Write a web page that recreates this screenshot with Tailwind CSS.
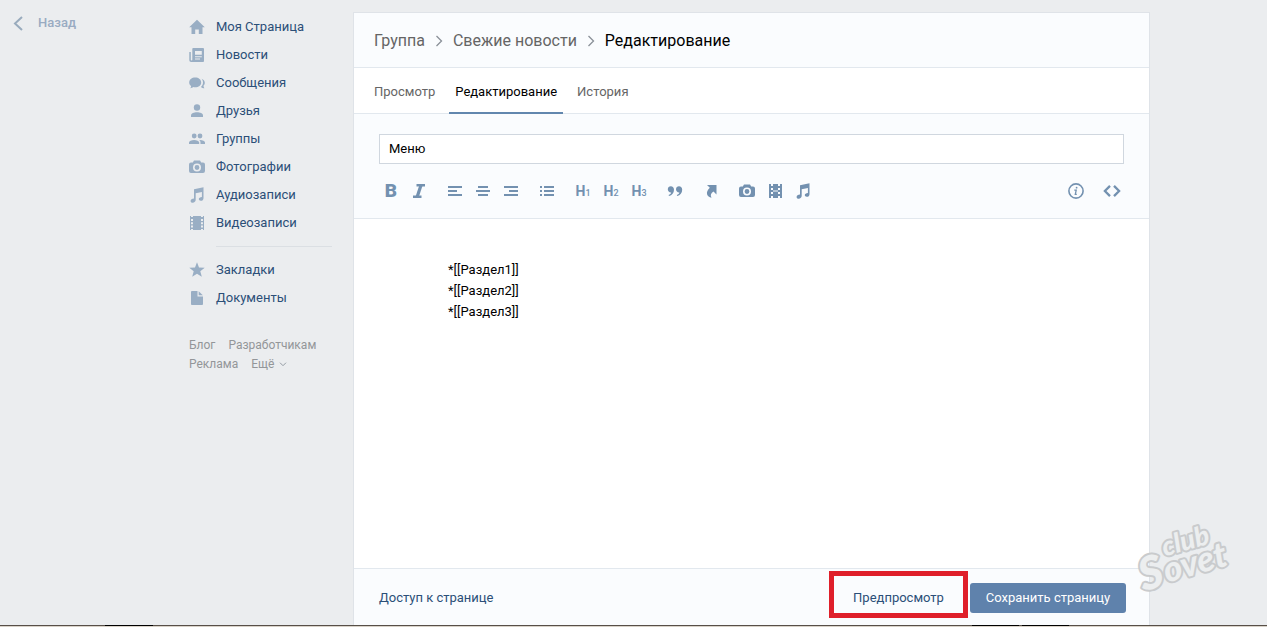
<!DOCTYPE html>
<html lang="ru">
<head>
<meta charset="utf-8">
<title>Редактирование</title>
<script src="https://cdn.jsdelivr.net/npm/@tailwindcss/browser@4"></script>
</head>
<body class="flex h-screen flex-col overflow-hidden bg-[#ebedef] font-[Roboto,'Noto_Sans',sans-serif] text-[13px] text-black">
<svg class="hidden" aria-hidden="true">
  <symbol id="camera" viewBox="0 0 16 14"><path fill-rule="evenodd" d="M5 .5h6l1.200 2H14a2 2 0 0 1 2 2V11a2 2 0 0 1-2 2H2a2 2 0 0 1-2-2V4.500a2 2 0 0 1 2-2h1.800zM8 3.500a4 4 0 1 0 0 8 4 4 0 0 0 0-8zm0 1.600a2.400 2.400 0 1 1 0 4.800 2.400 2.400 0 0 1 0-4.800z"/></symbol>
  <symbol id="film" viewBox="0 0 14 14"><path fill-rule="evenodd" d="M0 0h1v1h2V0h8v1h2V0h1v14h-1v-1h-2v1H3v-1H1v1H0zM1 3v2h2V3zm0 3.200v2h2v-2zM1 9.500v2h2v-2zM11 3v2h2V3zm0 3.200v2h2v-2zm0 3.300v2h2v-2z"/></symbol>
  <symbol id="film-split" viewBox="0 0 13 14"><path fill-rule="evenodd" d="M0 0h2v2h2V0h5v2h2V0h2v14h-2v-2H9v2H4v-2H2v2H0zM2 4v2h2V4zm0 4v2h2V8zM9 4v2h2V4zm0 4v2h2V8zM4 6.500v1h5v-1z"/></symbol>
  <symbol id="note" viewBox="0 0 14 16"><path fill-rule="evenodd" d="M4 2.300 13.500.3v10.900c0 1.600-1.200 2.600-2.700 2.600-1.200 0-2-.7-2-1.700 0-1.300 1.200-2.100 3.100-2.200V5L5.700 6.300v6.500c0 1.700-1.300 2.900-3.100 2.900-1.200 0-2-.7-2-1.800C.6 12.500 1.900 11.600 4 11.500z"/></symbol>
</svg>

<div class="flex min-h-0 flex-1 items-stretch pr-[117px]">
  <div class="w-[187px] shrink-0 pt-3 pl-[13px]">
    <a href="#" class="flex h-[22px] items-center gap-[14px] font-medium text-[#99abc2]">
      <svg class="h-[15px] w-[11px]" viewBox="0 0 11 15" fill="none" stroke="#99abbd" stroke-width="2"><path d="M9 1 2 7.500 9 14"/></svg>Назад</a>
  </div>

  <aside class="w-[166px] shrink-0 pt-[13px] pl-[2px]">
    <nav class="text-[#2b4f78]" aria-label="Главное меню">
      <a href="#" class="flex h-7 items-center gap-[11px]"><svg class="size-4" viewBox="0 0 16 16" fill="#99aec4"><path d="m8 .8 7.800 7.400H13.500V15H9.800v-4.600H6.200V15H2.500V8.200H.2z"/></svg>Моя Страница</a>
      <a href="#" class="flex h-7 items-center gap-[11px]"><svg class="size-4" viewBox="0 0 16 16" fill="#99aec4"><path fill-rule="evenodd" d="M4.500 1h9.300c.8 0 1.200.5 1.200 1.200v11.600c0 .8-.4 1.200-1.200 1.200H2.200C1 15 .3 14.200.3 13V5h1.500v8c0 .6 1.500.6 1.500 0V2.200C3.300 1.500 3.700 1 4.500 1zM6 4v3.800h6.800V4zm0 5.200v1h6.800v-1zm0 2.400v1h5v-1z"/></svg>Новости</a>
      <a href="#" class="flex h-7 items-center gap-[11px]"><svg class="size-4" viewBox="0 0 16 16" fill="#99aec4"><path d="M6.200 2.500c3.400 0 6 2.100 6 4.900s-2.600 4.900-6 4.900c-.7 0-1.300-.1-1.900-.3-.8.7-1.900 1.200-3.100 1.200.6-.6.9-1.400.9-2.200C.8 10.100.2 8.800.2 7.400c0-2.800 2.600-4.900 6-4.900z"/><path d="M12.600 3.700c1.900.7 3.200 2.200 3.200 4 0 1.200-.5 2.200-1.300 3 0 .8.300 1.800.9 2.500-1.300 0-2.600-.5-3.500-1.300 1.300-1.100 2.100-2.700 2.100-4.500 0-1.400-.5-2.700-1.400-3.700z"/></svg>Сообщения</a>
      <a href="#" class="flex h-7 items-center gap-[11px]"><svg class="size-4" viewBox="0 0 16 16" fill="#99aec4"><circle cx="8" cy="4.500" r="3.200"/><path d="M2 14v-1.500C2 10.300 5 9.300 8 9.300s6 1 6 3.200V14z"/></svg>Друзья</a>
      <a href="#" class="flex h-7 items-center gap-[11px]"><svg class="size-4" viewBox="0 0 16 16" fill="#99aec4"><circle cx="5.200" cy="5" r="2.400"/><circle cx="11" cy="5" r="2.400"/><path d="M0 13v-1.400c0-1.700 2.600-2.600 5.100-2.600s5.100.9 5.100 2.600V13zM11.500 13v-1.500c0-1-.5-1.800-1.300-2.400 2.800-.2 5.800.7 5.800 2.500V13z"/></svg>Группы</a>
      <a href="#" class="flex h-7 items-center gap-[11px]"><svg class="h-[14px] w-4" fill="#99aec4"><use href="#camera"/></svg>Фотографии</a>
      <a href="#" class="flex h-7 items-center gap-[11px]"><svg class="h-4 w-4" fill="#99aec4"><use href="#note"/></svg>Аудиозаписи</a>
      <a href="#" class="flex h-7 items-center gap-[11px]"><svg class="h-[14px] w-4" fill="#99aec4"><use href="#film"/></svg>Видеозаписи</a>
      <hr class="my-[9px] mr-[21px] ml-[27px] border-[#dbdfe3]">
      <a href="#" class="flex h-7 items-center gap-[11px]"><svg class="size-4" viewBox="0 0 16 16" fill="#99aec4"><path d="m8 .3 2 5.200 5.700.3-4.400 3.500 1.500 5.500L8 11.700l-4.800 3.100 1.500-5.500L.3 5.800 6 5.500z"/></svg>Закладки</a>
      <a href="#" class="flex h-7 items-center gap-[11px]"><svg class="size-4" viewBox="0 0 16 16" fill="#99aec4"><path d="M3.200 1H8.500v5.500H14v7.300c0 .8-.4 1.200-1.200 1.200H3.200C2.400 15 2 14.600 2 13.800V2.200C2 1.400 2.400 1 3.200 1z"/><path d="M9.700 1.200 13.800 5.300H9.700z"/></svg>Документы</a>
    </nav>
    <div class="mt-6 flex flex-wrap gap-x-[13px] text-xs leading-[19px] text-[#939699]">
      <a href="#" class="leading-[19px]">Блог</a><a href="#" class="leading-[19px]">Разработчикам</a>
      <a href="#" class="leading-[19px]">Реклама</a><a href="#" class="flex items-center gap-[5px] leading-[19px]">Ещё<svg class="h-[5px] w-2" viewBox="0 0 8 5" fill="none" stroke="#939ba3"><path d="m1 .7 3 3 3-3"/></svg></a>
    </div>
  </aside>

  <main class="mt-3 flex min-w-0 flex-1 flex-col border border-b-0 border-[#dfe3e8] bg-white">
    <header class="flex h-[55px] shrink-0 items-center gap-[9px] border-b border-[#e2e8ee] bg-[#fafcfe] px-5 pt-px text-base text-[#656565]">
      <a href="#">Группа</a>
      <svg class="h-3 w-[10px]" viewBox="0 0 10 12" fill="none" stroke="#8a9098" stroke-width="1.300"><path d="m2.500 1 5 5-5 5"/></svg>
      <a href="#">Свежие новости</a>
      <svg class="h-3 w-[10px]" viewBox="0 0 10 12" fill="none" stroke="#8a9098" stroke-width="1.300"><path d="m2.500 1 5 5-5 5"/></svg>
      <h1 class="text-black">Редактирование</h1>
    </header>
    <nav class="flex h-[46px] shrink-0 border-b border-[#e2e8ee] px-[14px] text-[#656565]" aria-label="Вкладки">
      <a href="#" class="flex h-[46px] items-center border-b-2 border-transparent px-[6px] pt-[3px]">Просмотр</a>
      <a href="#" aria-current="page" class="ml-2 flex h-[46px] items-center border-b-2 border-[#6287ae] px-[6px] pt-[3px] text-black">Редактирование</a>
      <a href="#" class="ml-2 flex h-[46px] items-center border-b-2 border-transparent px-[6px] pt-[3px]">История</a>
    </nav>

    <section class="h-[105px] shrink-0 border-b border-[#e2e8ee] bg-[#fafcfe] pt-5">
      <div class="px-[25px]"><input type="text" aria-label="Название" value="Меню" class="h-[30px] w-full border border-[#d0d7df] bg-white px-[9px] pb-px"></div>
      <div class="mt-[13px] flex items-center px-[23px] text-[#7391b0]">
        <button aria-label="Полужирный" class="h-7 w-7 text-[19px] leading-7 font-black">B</button>
        <button aria-label="Курсив" class="flex size-7 items-center justify-center"><svg class="size-4" viewBox="0 0 16 16" fill="none" stroke="currentColor" stroke-width="2.400"><path d="M5.500 2.200H14M2 13.800h8.500"/><path stroke-width="3.200" d="M10 2.200 6.200 13.800"/></svg></button>
        <button aria-label="По левому краю" class="ml-2 flex size-7 items-center justify-center"><svg class="size-4" viewBox="0 0 16 16" fill="currentColor"><path d="M1 3h14v2H1zm0 4h9v2H1zm0 4h14v2H1z"/></svg></button>
        <button aria-label="По центру" class="flex size-7 items-center justify-center"><svg class="size-4" viewBox="0 0 16 16" fill="currentColor"><path d="M3 3h10v2H3zM1 7h14v2H1zm2 4h10v2H3z"/></svg></button>
        <button aria-label="По правому краю" class="flex size-7 items-center justify-center"><svg class="size-4" viewBox="0 0 16 16" fill="currentColor"><path d="M1 3h14v2H1zm5 4h9v2H6zm-5 4h14v2H1z"/></svg></button>
        <button aria-label="Список" class="ml-2 flex size-7 items-center justify-center"><svg class="size-4" viewBox="0 0 16 16" fill="currentColor"><path d="M1 3h2v2H1zm0 4h2v2H1zm0 4h2v2H1zm4-8h10v2H5zm0 4h10v2H5zm0 4h10v2H5z"/></svg></button>
        <button class="ml-2 h-7 w-7 text-[14px] font-bold">H<span class="text-[9px] font-medium">1</span></button>
        <button class="h-7 w-7 text-[14px] font-bold">H<span class="text-[9px] font-medium">2</span></button>
        <button class="h-7 w-7 text-[14px] font-bold">H<span class="text-[9px] font-medium">3</span></button>
        <button aria-label="Цитата" class="ml-2 flex size-7 items-center justify-center"><svg class="size-4" viewBox="0 0 16 16" fill="currentColor"><path id="q" d="M3.800 3.200c1.900 0 3.200 1.400 3.200 3.500 0 3.200-2 5.600-5 6.300l-.4-1c1.500-.6 2.400-1.500 2.600-2.600C2.400 9.600.8 8.300.8 6.200c0-1.700 1.300-3 3-3z"/><use href="#q" x="8.200"/></svg></button>
        <button aria-label="Ссылка" class="ml-2 flex size-7 items-center justify-center"><svg class="size-4" viewBox="0 0 16 16" fill="currentColor"><path d="M4 2h9.500v9.500l-3-3C8 10 7 12 8.500 14.800 4 13.800 1.800 9.500 6.800 4.800z"/></svg></button>
        <button aria-label="Фото" class="ml-2 flex size-7 items-center justify-center"><svg class="h-[14px] w-4" fill="currentColor"><use href="#camera"/></svg></button>
        <button aria-label="Видео" class="flex size-7 items-center justify-center"><svg class="h-[14px] w-[13px]" fill="currentColor"><use href="#film-split"/></svg></button>
        <button aria-label="Аудио" class="flex size-7 items-center justify-center"><svg class="h-4 w-[14px]" fill="currentColor"><use href="#note"/></svg></button>
        <button aria-label="Справка" class="ml-auto flex size-7 items-center justify-center"><svg class="size-4" viewBox="0 0 16 16" fill="none" stroke="currentColor" stroke-width="1.600"><circle cx="8" cy="8" r="7.100"/><path stroke-width="1.300" d="M6.300 7.200h1.900L7.300 11.300h1.500"/><circle cx="8.600" cy="4.700" r=".9" fill="currentColor" stroke="none"/></svg></button>
        <button aria-label="Исходный код" class="ml-2 flex size-7 items-center justify-center"><svg class="h-3 w-[18px]" viewBox="0 0 18 12" fill="none" stroke="currentColor" stroke-width="2.300"><path d="M7 .9 1.900 6 7 11.100M11 .9 16.100 6 11 11.100"/></svg></button>
      </div>
    </section>

    <textarea aria-label="Текст страницы" class="min-h-0 flex-1 resize-none bg-white px-[94px] pt-10 leading-[21px] outline-none">*[[Раздел1]]
*[[Раздел2]]
*[[Раздел3]]</textarea>

    <footer class="flex h-[57px] shrink-0 items-center border-t border-[#e2e8ee] bg-[#fafcfe] pt-[2px] pr-[23px] pl-[25px] text-[#2b4f78]">
      <a href="#">Доступ к странице</a>
      <div class="relative mr-[2px] ml-auto">
        <button class="block h-[30px] w-[139px]">Предпросмотр</button>
        <div class="pointer-events-none absolute inset-x-0 -top-3 h-[47px] border-[5px] border-[#df1f2a]"></div>
      </div>
      <button class="h-[30px] w-[156px] rounded-[3px] bg-[#5f82ac] text-white">Сохранить страницу</button>
    </footer>
  </main>
</div>

<div class="h-[2px] shrink-0 border-t border-[#574f48] bg-[#d8d2c8]">
  <svg class="-mt-px h-px w-full" fill="#000" aria-hidden="true"><path d="M105 0h48v1h-48zM972 0h47v1h-47zM1022 0h47v1h-47z"/></svg>
</div>

<svg class="pointer-events-none absolute right-[32px] bottom-[28px] h-[80px] w-[104px]" viewBox="0 0 104 80" role="img" aria-label="club Sovet" font-family="Lato,sans-serif" font-style="italic" font-weight="900" fill="#eceeef" stroke="#c9cbcd" stroke-linejoin="round" paint-order="stroke">
  <g transform="rotate(-16 50 40)" stroke-width="4">
    <text x="35" y="33" font-size="27">club</text>
    <text x="5" y="61" font-size="46">S</text>
    <text x="30" y="59" font-size="35">ovet</text>
  </g>
</svg>
</body>
</html>
